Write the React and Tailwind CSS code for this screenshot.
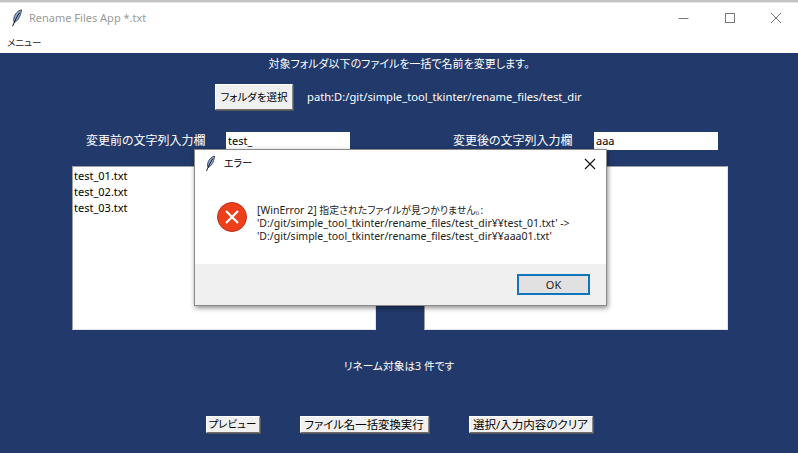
import React from 'react';

const font = { fontFamily: '"Noto Sans", "Noto Sans CJK JP", sans-serif', fontFeatureSettings: '"palt"' };

function Feather({ className }) {
  return (
    <svg viewBox="0 0 12 18" className={className}>
      <path d="M10.5 0.8C7 1.6 3.6 5 2.8 9.5 2.5 11.2 2.8 12.6 3.4 13.4 6.6 12 9.6 8 10.5 0.8Z" fill="#8ea8d0" stroke="#1a2740" strokeWidth="0.8" />
      <path d="M8.6 3.6C6.4 6.6 4 11.4 1.6 17.2" fill="none" stroke="#0b0f1a" strokeWidth="1" />
    </svg>
  );
}

function TkButton({ children, className = '' }) {
  return (
    <button className={`bg-[#f0f0f0] leading-none text-black whitespace-nowrap flex items-center justify-center border border-t-white border-l-white border-r-[#8a8a8a] border-b-[#6f6f6f] shadow-[1px_1px_0_#555] ${className}`}>
      {children}
    </button>
  );
}

function ListBox({ items = [] }) {
  return (
    <div className="w-[304px] h-[164px] bg-white border border-t-[#a0a0a0] border-l-[#a0a0a0] border-r-[#e3e3e3] border-b-[#e3e3e3] pl-[1px] pt-[1px] text-[11px] leading-[16px] text-black">
      {items.map((f) => <div key={f}>{f}</div>)}
    </div>
  );
}

export default function App() {
  return (
    <div className="relative w-[798px] h-[453px] overflow-hidden bg-[#223a6b] flex flex-col" style={font}>
      <div className="h-[3px] bg-[#c4c4c4] border-b border-[#e8e8e8]" />

      {/* Title bar */}
      <div className="h-[30px] bg-white flex items-center pl-[11px] text-[11px] text-[#9a9a9a]">
        <Feather className="w-[12px] h-[18px]" />
        <span className="ml-[6px]">Rename Files App *.txt</span>
        <div className="ml-auto flex items-center pr-[16px]">
          <svg width="12" height="12" viewBox="0 0 12 12" className="mr-[35px]"><path d="M1.5 6.5h10" stroke="#777" strokeWidth="1" /></svg>
          <svg width="12" height="12" viewBox="0 0 12 12" className="mr-[34px]"><rect x="1.5" y="1.5" width="9" height="9" fill="none" stroke="#777" strokeWidth="1" /></svg>
          <svg width="12" height="12" viewBox="0 0 12 12"><path d="M1 1l10 10M11 1L1 11" stroke="#777" strokeWidth="1" /></svg>
        </div>
      </div>

      {/* Menu */}
      <div className="h-[20px] bg-white pl-[7px] text-[9.5px] leading-[20px] text-[#222]">メニュー</div>

      {/* Body */}
      <div className="flex-1 flex flex-col text-white text-[12px]">
        <div className="h-[20px] mt-[1px] leading-[20px] text-center text-[11px]">対象フォルダ以下のファイルを一括で名前を変更します。</div>

        <div className="flex items-center h-[26px] mt-[10px] pl-[215px]">
          <TkButton className="w-[78px] h-[26px] text-[10.5px]">フォルダを選択</TkButton>
          <span className="ml-[14px] text-[11.2px]">path:D:/git/simple_tool_tkinter/rename_files/test_dir</span>
        </div>

        <div className="flex items-center h-[18px] mt-[22px] pl-[86px]">
          <span className="w-[140px]">変更前の文字列入力欄</span>
          <div className="w-[124px] h-[18px] bg-white text-black pl-[2px] text-[11px] leading-[18px]">test_</div>
          <span className="w-[141px] ml-[103px]">変更後の文字列入力欄</span>
          <div className="w-[124px] h-[18px] bg-white text-black pl-[2px] text-[11px] leading-[18px]">aaa</div>
        </div>

        <div className="flex mt-[16px] pl-[72px] gap-[48px]">
          <ListBox items={['test_01.txt', 'test_02.txt', 'test_03.txt']} />
          <ListBox />
        </div>

        <div className="mt-[26px] h-[20px] leading-[20px] text-center text-[10.7px]">リネーム対象は3 件です</div>

        <div className="flex justify-center gap-[40px] mt-[40px]">
          <TkButton className="w-[54px] h-[17px] text-[10.5px]">プレビュー</TkButton>
          <TkButton className="w-[129px] h-[17px] text-[11.4px]">ファイル名一括変換実行</TkButton>
          <TkButton className="w-[124px] h-[17px] text-[11.5px]">選択/入力内容のクリア</TkButton>
        </div>
      </div>

      {/* Error dialog */}
      <div className="absolute left-[194px] top-[149px] w-[413px] h-[157px] bg-white border border-[#8a8a8a] shadow-[1px_2px_5px_rgba(0,0,0,0.45)] flex flex-col text-black">
        <div className="h-[27px] flex items-center pl-[10px] pr-[10px] text-[10px]">
          <Feather className="w-[11px] h-[17px]" />
          <span className="ml-[8px]">エラー</span>
          <svg width="12" height="12" viewBox="0 0 12 12" className="ml-auto"><path d="M1 1l10 10M11 1L1 11" stroke="#111" strokeWidth="1.1" /></svg>
        </div>
        <div className="flex-1 flex pl-[22px] pt-[25px]">
          <svg width="30" height="30" viewBox="0 0 30 30" className="shrink-0">
            <circle cx="15" cy="15" r="14.5" fill="#ee3f1c" stroke="#b8341a" strokeWidth="1" />
            <path d="M9 9l12 12M21 9L9 21" stroke="#fff" strokeWidth="2.2" />
          </svg>
          <div className="ml-[10px] mt-[2px] text-[10.5px] leading-[13px] text-[#222] whitespace-pre">
            [WinError 2] <span className="text-[9.9px]">指定されたファイルが見つかりません。:</span>
            {"\n'D:/git/simple_tool_tkinter/rename_files/test_dir¥¥test_01.txt' ->\n'D:/git/simple_tool_tkinter/rename_files/test_dir¥¥aaa01.txt'"}
          </div>
        </div>
        <div className="h-[41px] bg-[#f0f0f0] flex items-center justify-end pr-[16px]">
          <div className="w-[73px] h-[21px] bg-[#e1e1e1] border-2 border-[#0f75bd] text-[11px] leading-[17px] text-center text-[#222]">OK</div>
        </div>
      </div>
    </div>
  );
}
